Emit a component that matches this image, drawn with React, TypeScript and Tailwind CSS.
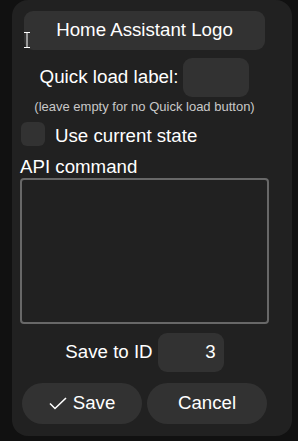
import React from "react";

export default function App() {
  return (
    <div
      className="w-[298px] h-[441px] bg-[#111111] overflow-hidden relative"
      style={{ fontFamily: '"Liberation Sans", Arial, sans-serif' }}
    >
      <div className="ml-[12px] w-[280px] h-[436px] bg-[#212121] rounded-[16px] pt-[11px]">
        <div className="ml-[8px] w-[249px] flex flex-col">
          <div className="self-center w-[241px] h-[39px] rounded-[9px] bg-[#323232] flex items-center justify-center text-white text-[18.7px]">
            Home Assistant Logo
          </div>
          <div className="mt-[8px] h-[39px] self-center flex items-center gap-[5px]">
            <span className="text-white text-[18.8px]">Quick load label:</span>
            <div className="w-[66px] h-[39px] rounded-[9px] bg-[#323232]" />
          </div>
          <div className="self-center mt-[2px] text-[13px] leading-[16px] text-[#c8c8c8] whitespace-nowrap">
            (leave empty for no Quick load button)
          </div>
          <div className="mt-[7px] h-[24px] flex items-end">
            <div className="ml-[1px] w-[24px] h-[24px] rounded-[6px] bg-[#323232]" />
            <span className="ml-[10px] text-white text-[18.7px] leading-[20px]">Use current state</span>
          </div>
          <div className="mt-[11px] text-white text-[18.7px] leading-[20px]">API command</div>
          <div className="mt-[1px] w-[249px] h-[146px] rounded-[4px] border-2 border-[#686868] bg-[#212121]" />
          <div className="mt-[9px] h-[39px] self-center flex items-center gap-[5px]">
            <span className="text-white text-[18.7px]">Save to ID</span>
            <div className="w-[66px] h-[39px] rounded-[9px] bg-[#323232] flex items-center justify-end pr-[8px] text-white text-[18.7px]">
              3
            </div>
          </div>
          <div className="mt-[11px] ml-[2px] flex gap-[5px]">
            <div className="w-[120px] h-[41px] rounded-[21px] bg-[#323232] flex items-center justify-center gap-[6px] text-white text-[18.7px]">
              <svg width="18" height="13" viewBox="0 0 18 13" fill="none">
                <path d="M1 6.5 L6 11.5 L17 1" stroke="#ffffff" strokeWidth="1.6" />
              </svg>
              <span>Save</span>
            </div>
            <div className="w-[120px] h-[41px] rounded-[21px] bg-[#323232] flex items-center justify-center text-white text-[18.7px]">
              Cancel
            </div>
          </div>
        </div>
      </div>
      <svg className="absolute left-[23px] top-[32px]" width="8" height="16" viewBox="0 0 8 16">
        <path d="M1 0.5 H7 M4 0.5 V15.5 M1 15.5 H7" stroke="#ffffff" strokeWidth="1" />
      </svg>
    </div>
  );
}
